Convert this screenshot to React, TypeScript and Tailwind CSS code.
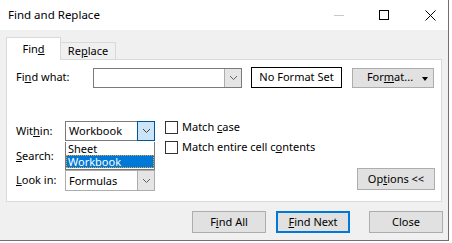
import React from 'react';

const font = { fontFamily: '"Noto Sans", "Segoe UI", sans-serif' };

function Chevron({ color = '#606060' }: { color?: string }) {
  return (
    <svg width="9" height="6" viewBox="0 0 9 6">
      <polyline points="1,1 4.5,4.5 8,1" fill="none" stroke={color} strokeWidth="1" />
    </svg>
  );
}

function Box() {
  return <span className="block w-[13px] h-[13px] border border-[#333] bg-white shrink-0" />;
}

function Btn({ children, w = 'w-[74px]', focus = false }: { children: React.ReactNode; w?: string; focus?: boolean }) {
  return (
    <div
      className={`${w} h-[22px] flex items-center justify-center bg-[#e1e1e1] ${
        focus ? 'border-2 border-[#0078d7]' : 'border border-[#adadad]'
      }`}
    >
      {children}
    </div>
  );
}

export default function App() {
  return (
    <div className="w-[452px] h-[243px] bg-white overflow-hidden text-[11px] text-black" style={font}>
      <div className="w-[449px] h-[241px] bg-[#f0f0f0] border-r border-b border-[#707070] flex flex-col">
        {/* barre de titre */}
        <div className="h-[30px] bg-white flex items-center shrink-0">
          <span className="pl-[8px] flex-1 leading-none text-[11.5px]">Find and Replace</span>
          <div className="w-[10px] h-px bg-[#c8c8c8] mr-[35px]" />
          <div className="w-[10px] h-[10px] border border-black mr-[36px]" />
          <svg width="11" height="11" viewBox="0 0 11 11" className="mr-[12px]">
            <path d="M0.5 0.5 L10.5 10.5 M10.5 0.5 L0.5 10.5" stroke="#000" strokeWidth="1" />
          </svg>
        </div>

        <div className="pl-[6px] pt-[7px]">
          {/* onglets */}
          <div className="flex items-end h-[22px]">
            <div className="w-[55px] h-[23px] bg-white border border-b-0 border-[#d9d9d9] flex items-center justify-center relative z-10 -mb-px">
              <span>
                Fin<span className="underline">d</span>
              </span>
            </div>
            <div className="w-[55px] h-[17px] border border-b-0 border-l-0 border-[#d9d9d9] flex items-center justify-center pt-px">
              <span>
                Re<span className="underline">p</span>lace
              </span>
            </div>
          </div>

          {/* panneau */}
          <div className="w-[436px] h-[143px] bg-white border border-[#d9d9d9] pl-[9px] pr-[6px] relative">
            <div className="flex items-center mt-[7px] h-[21px]">
              <span className="w-[77px]">
                Fi<span className="underline">n</span>d what:
              </span>
              <div className="w-[149px] h-[20px] border border-[#7a7a7a] flex">
                <div className="flex-1" />
                <div className="w-[17px] bg-[#e5e5e5] border-l border-[#adadad] flex items-center justify-center">
                  <Chevron />
                </div>
              </div>
              <div className="ml-[9px] w-[91px] h-[21px] border border-black flex items-center justify-center">
                No Format Set
              </div>
              <div className="ml-[10px] w-[82px] h-[20px] bg-[#e1e1e1] border border-[#adadad] flex items-center relative">
                <span className="flex-1 text-center pr-[6px]">
                  For<span className="underline">m</span>at...
                </span>
                <span className="absolute right-[5px] top-[8px] w-0 h-0 border-l-[3px] border-r-[3px] border-t-[4px] border-l-transparent border-r-transparent border-t-black" />
              </div>
            </div>

            <div className="flex mt-[33px] items-end">
              <div className="flex flex-col">
                <div className="flex items-center h-[20px]">
                  <span className="w-[49px]">
                    Wit<span className="underline">h</span>in:
                  </span>
                  <div className="w-[90px] h-[20px] border border-[#7a7a7a] flex">
                    <span className="flex-1 pl-[3px] leading-[18px]">Workbook</span>
                    <div className="w-[18px] -my-px -mr-px bg-[#cce4f7] border border-[#005499] flex items-center justify-center">
                      <Chevron color="#404040" />
                    </div>
                  </div>
                </div>
                <div className="flex items-center h-[20px] mt-[5px]">
                  <span className="w-[49px]">
                    <span className="underline">S</span>earch:
                  </span>
                </div>
                <div className="flex items-center h-[21px] mt-[4px]">
                  <span className="w-[49px]">
                    <span className="underline">L</span>ook in:
                  </span>
                  <div className="w-[90px] h-[21px] border border-[#adadad] flex">
                    <span className="flex-1 pl-[3px] leading-[19px]">Formulas</span>
                    <div className="w-[17px] bg-[#e5e5e5] border-l border-[#adadad] flex items-center justify-center">
                      <Chevron />
                    </div>
                  </div>
                </div>
              </div>

              <div className="flex flex-col self-start ml-[10px] flex-1">
                <div className="flex items-center h-[13px] gap-[4px]">
                  <Box />
                  <span>
                    Match <span className="underline">c</span>ase
                  </span>
                </div>
                <div className="flex items-center h-[13px] gap-[4px] mt-[7px]">
                  <Box />
                  <span>
                    Match entire cell c<span className="underline">o</span>ntents
                  </span>
                </div>
              </div>

              <div className="mb-px">
                <Btn w="w-[78px]">
                  <span>
                    Op<span className="underline">t</span>ions &lt;&lt;
                  </span>
                </Btn>
              </div>
            </div>

            {/* liste déroulante ouverte */}
            <div className="absolute left-[58px] top-[82px] w-[90px] h-[28px] bg-white border border-[#7a7a7a] border-t-0 flex flex-col leading-[13px] z-20">
              <span className="pl-[2px] h-[13px]">Sheet</span>
              <span className="pl-[2px] h-[13px] bg-[#0078d7] text-white outline-1 outline-dotted outline-[#f0a030] -outline-offset-1">
                Workbook
              </span>
            </div>
          </div>

          {/* boutons du bas */}
          <div className="flex mt-[9px] pl-[186px]">
            <Btn>
              <span>
                F<span className="underline">i</span>nd All
              </span>
            </Btn>
            <div className="ml-[10px]">
              <Btn focus>
                <span>
                  <span className="underline">F</span>ind Next
                </span>
              </Btn>
            </div>
            <div className="ml-[19px]">
              <Btn>Close</Btn>
            </div>
          </div>
        </div>
      </div>
    </div>
  );
}
